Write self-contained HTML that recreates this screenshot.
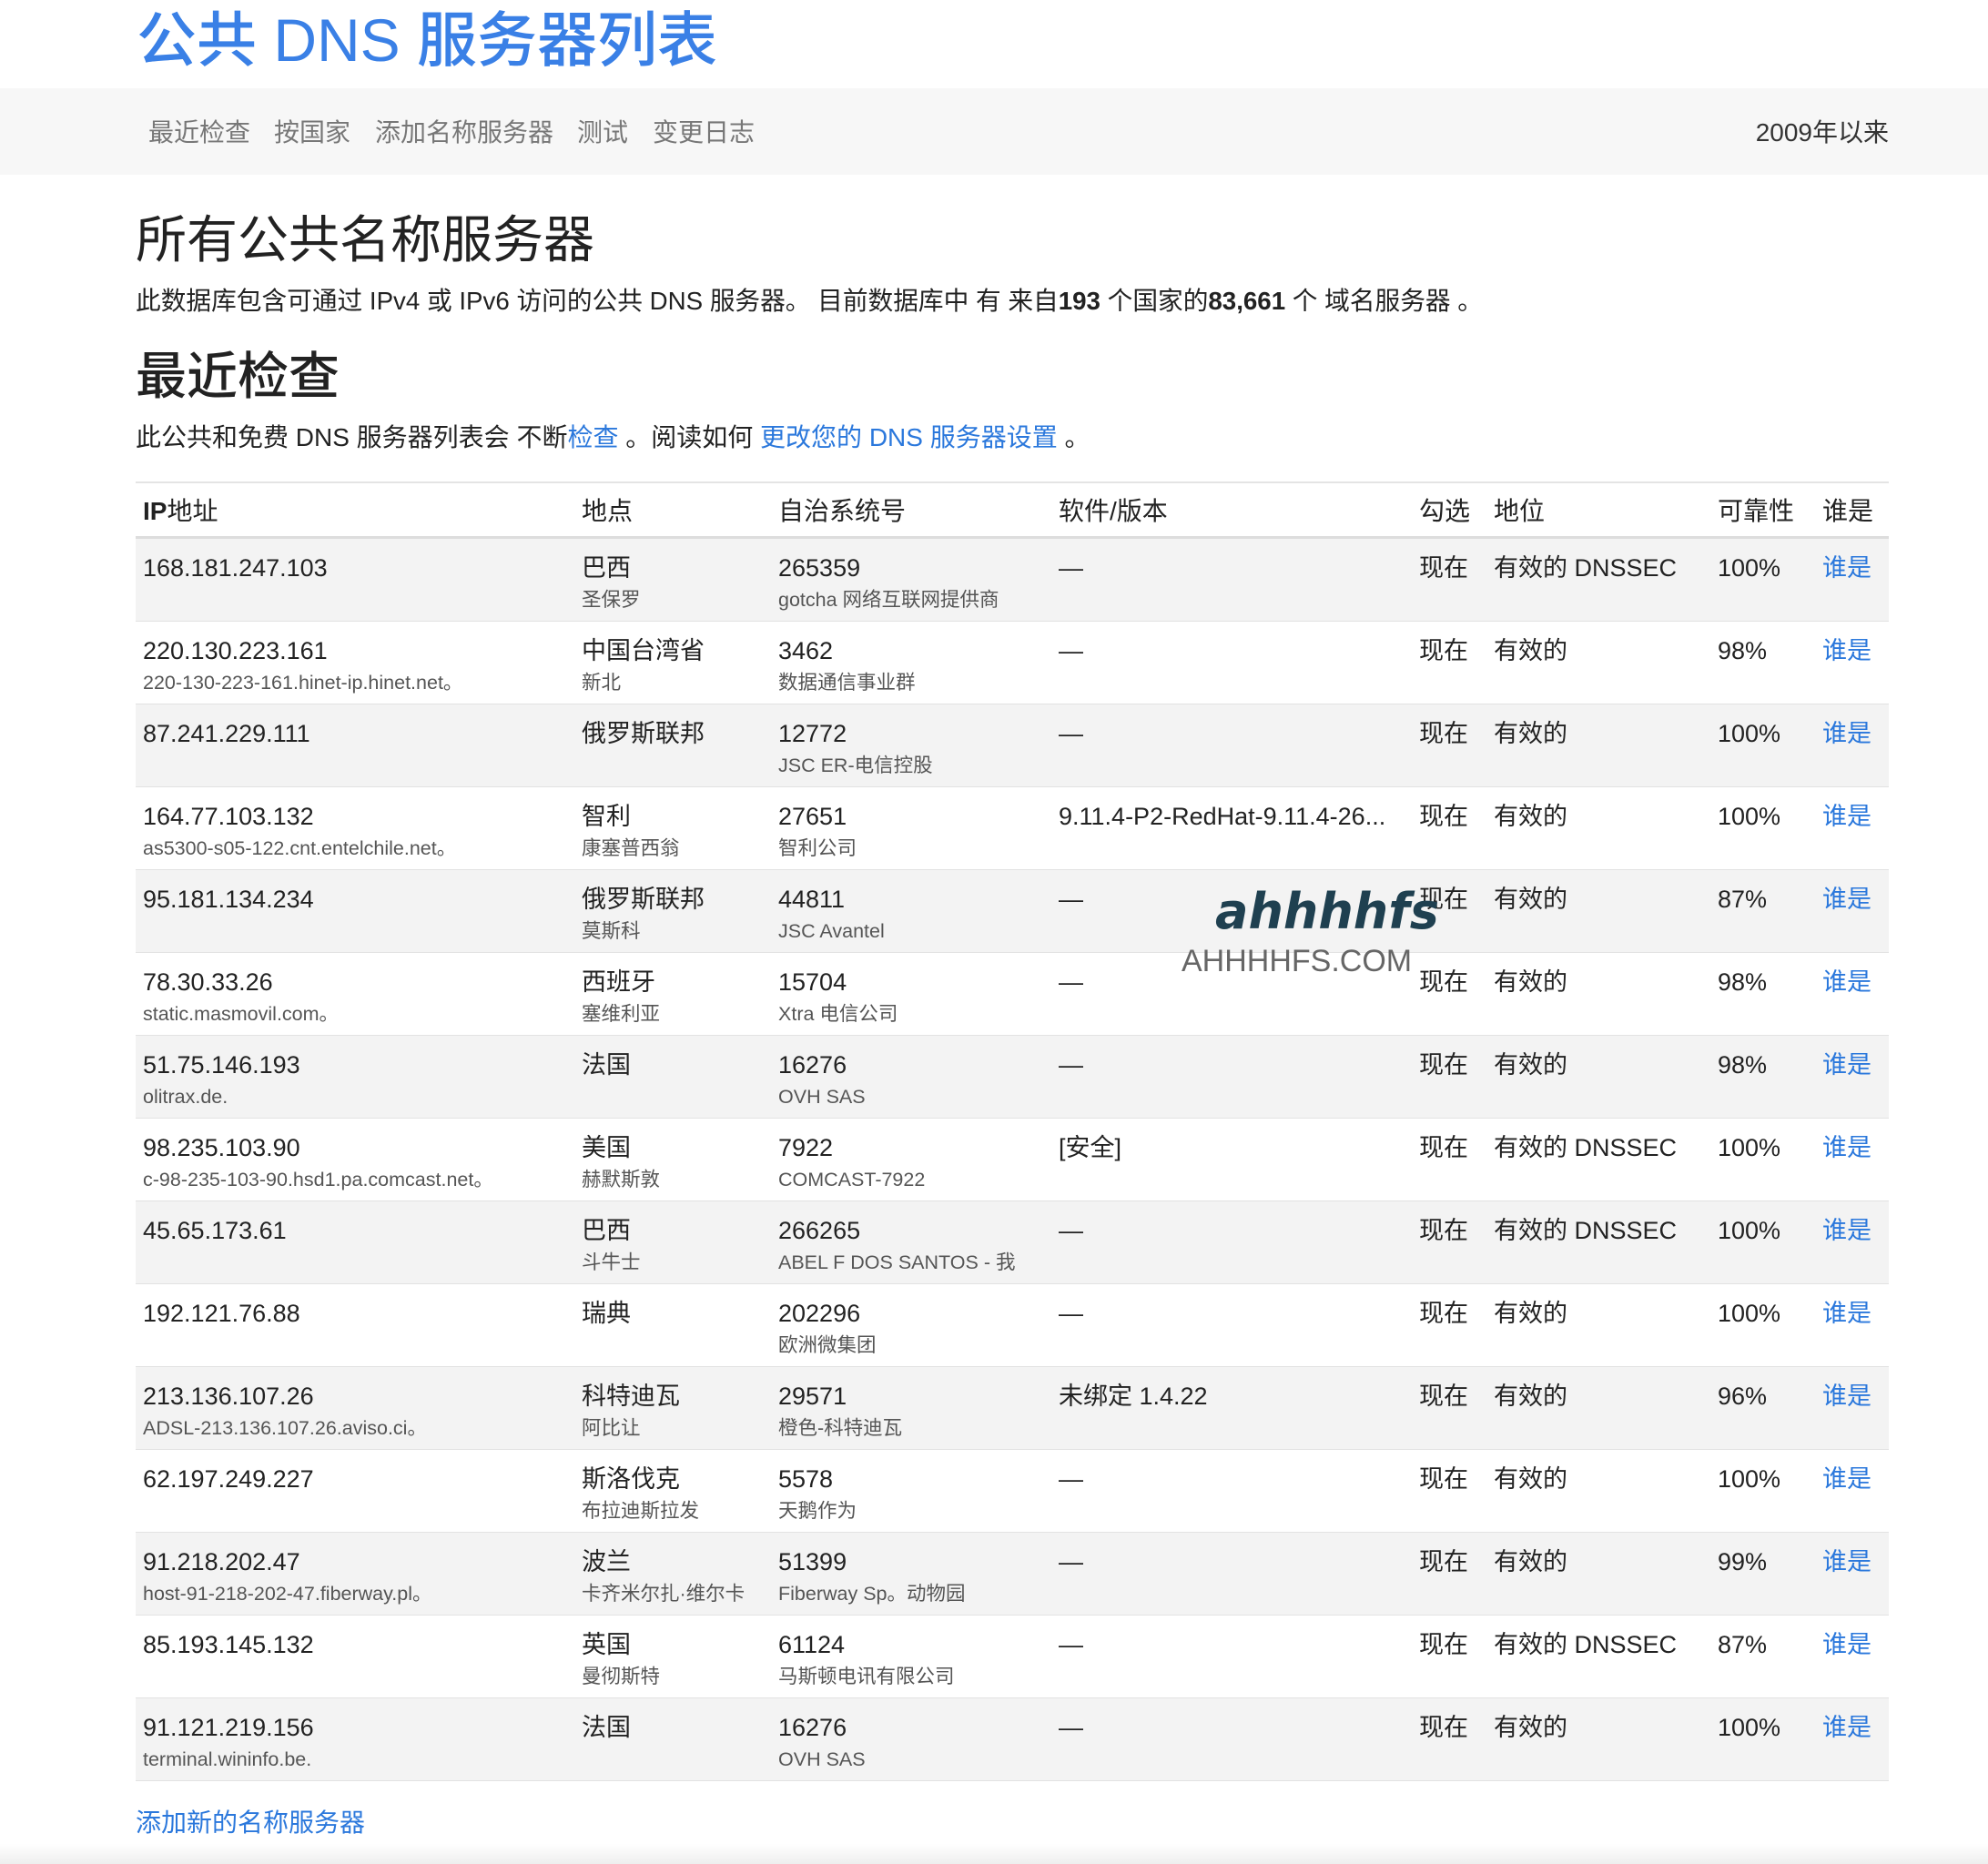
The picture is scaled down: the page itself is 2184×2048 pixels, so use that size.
<!DOCTYPE html>
<html><head><meta charset="utf-8"><style>
*{margin:0;padding:0;box-sizing:border-box}
body{width:2184px;height:2048px;background:#fff;font-family:"Liberation Sans","Noto Sans CJK SC",sans-serif;color:#222;position:relative;overflow:hidden}
.abs{position:absolute;white-space:nowrap}
.blue{color:#2b78dc}
.nav{position:absolute;left:0;top:97px;width:2184px;height:95px;background:#f7f7f7}
.nav span{position:absolute;top:32px;font-size:28px;line-height:34px;color:#777}
.tbl{position:absolute;left:149px;top:529px;width:1926px;border-top:2px solid #e4e4e4}
.hdr{height:61px;border-bottom:3px solid #ddd;position:relative}
.row{height:91px;border-bottom:1px solid #e2e2e2;position:relative}
.row:nth-child(odd){background:#f3f3f3}
.c{position:absolute;top:0;white-space:nowrap}
.hdr .c{top:13px;font-size:28px;line-height:36px}
.l1{display:block;font-size:27px;line-height:36px;margin-top:14px}
.l2{display:block;font-size:21.5px;line-height:26px;margin-top:4px;color:#555}
</style></head><body>
<div class="abs" style="left:150px;top:4px;font-size:66px;line-height:80px;color:#3a80e6;font-weight:500">公共 DNS 服务器列表</div>
<div class="nav">
<span style="left:163px">最近检查</span>
<span style="left:301px">按国家</span>
<span style="left:412px">添加名称服务器</span>
<span style="left:634px">测试</span>
<span style="left:717px">变更日志</span>
<span style="right:109px;color:#333">2009年以来</span>
</div>
<div class="abs" style="left:149px;top:228px;font-size:56px;line-height:72px">所有公共名称服务器</div>
<div class="abs" style="left:149px;top:313px;font-size:27.7px;line-height:36px">此数据库包含可通过 IPv4 或 IPv6 访问的公共 DNS 服务器。 目前数据库中 有 来自<b>193</b> 个国家的<b>83,661</b> 个 域名服务器 。</div>
<div class="abs" style="left:149px;top:378px;font-size:56px;line-height:72px;font-weight:500">最近检查</div>
<div class="abs" style="left:149px;top:463px;font-size:28px;line-height:36px">此公共和免费 DNS 服务器列表会 不断<span class="blue">检查</span> 。阅读如何 <span class="blue">更改您的 DNS 服务器设置</span> 。</div>

<div class="tbl">
<div class="hdr">
<div class="c" style="left:8px"><b>IP</b>地址</div>
<div class="c" style="left:490px">地点</div>
<div class="c" style="left:706px">自治系统号</div>
<div class="c" style="left:1014px">软件/版本</div>
<div class="c" style="left:1410px">勾选</div>
<div class="c" style="left:1492px">地位</div>
<div class="c" style="left:1738px">可靠性</div>
<div class="c" style="left:1853px">谁是</div>
</div>
<div>
<div class="row"><div class="c" style="left:8px"><span class="l1">168.181.247.103</span></div><div class="c" style="left:490px"><span class="l1">巴西</span><span class="l2">圣保罗</span></div><div class="c" style="left:706px"><span class="l1">265359</span><span class="l2">gotcha 网络互联网提供商</span></div><div class="c" style="left:1014px"><span class="l1">—</span></div><div class="c" style="left:1410px"><span class="l1">现在</span></div><div class="c" style="left:1492px"><span class="l1">有效的 DNSSEC</span></div><div class="c" style="left:1738px"><span class="l1">100%</span></div><div class="c blue" style="left:1853px"><span class="l1">谁是</span></div></div>
<div class="row"><div class="c" style="left:8px"><span class="l1">220.130.223.161</span><span class="l2">220-130-223-161.hinet-ip.hinet.net。</span></div><div class="c" style="left:490px"><span class="l1">中国台湾省</span><span class="l2">新北</span></div><div class="c" style="left:706px"><span class="l1">3462</span><span class="l2">数据通信事业群</span></div><div class="c" style="left:1014px"><span class="l1">—</span></div><div class="c" style="left:1410px"><span class="l1">现在</span></div><div class="c" style="left:1492px"><span class="l1">有效的</span></div><div class="c" style="left:1738px"><span class="l1">98%</span></div><div class="c blue" style="left:1853px"><span class="l1">谁是</span></div></div>
<div class="row"><div class="c" style="left:8px"><span class="l1">87.241.229.111</span></div><div class="c" style="left:490px"><span class="l1">俄罗斯联邦</span></div><div class="c" style="left:706px"><span class="l1">12772</span><span class="l2">JSC ER-电信控股</span></div><div class="c" style="left:1014px"><span class="l1">—</span></div><div class="c" style="left:1410px"><span class="l1">现在</span></div><div class="c" style="left:1492px"><span class="l1">有效的</span></div><div class="c" style="left:1738px"><span class="l1">100%</span></div><div class="c blue" style="left:1853px"><span class="l1">谁是</span></div></div>
<div class="row"><div class="c" style="left:8px"><span class="l1">164.77.103.132</span><span class="l2">as5300-s05-122.cnt.entelchile.net。</span></div><div class="c" style="left:490px"><span class="l1">智利</span><span class="l2">康塞普西翁</span></div><div class="c" style="left:706px"><span class="l1">27651</span><span class="l2">智利公司</span></div><div class="c" style="left:1014px"><span class="l1">9.11.4-P2-RedHat-9.11.4-26...</span></div><div class="c" style="left:1410px"><span class="l1">现在</span></div><div class="c" style="left:1492px"><span class="l1">有效的</span></div><div class="c" style="left:1738px"><span class="l1">100%</span></div><div class="c blue" style="left:1853px"><span class="l1">谁是</span></div></div>
<div class="row"><div class="c" style="left:8px"><span class="l1">95.181.134.234</span></div><div class="c" style="left:490px"><span class="l1">俄罗斯联邦</span><span class="l2">莫斯科</span></div><div class="c" style="left:706px"><span class="l1">44811</span><span class="l2">JSC Avantel</span></div><div class="c" style="left:1014px"><span class="l1">—</span></div><div class="c" style="left:1410px"><span class="l1">现在</span></div><div class="c" style="left:1492px"><span class="l1">有效的</span></div><div class="c" style="left:1738px"><span class="l1">87%</span></div><div class="c blue" style="left:1853px"><span class="l1">谁是</span></div></div>
<div class="row"><div class="c" style="left:8px"><span class="l1">78.30.33.26</span><span class="l2">static.masmovil.com。</span></div><div class="c" style="left:490px"><span class="l1">西班牙</span><span class="l2">塞维利亚</span></div><div class="c" style="left:706px"><span class="l1">15704</span><span class="l2">Xtra 电信公司</span></div><div class="c" style="left:1014px"><span class="l1">—</span></div><div class="c" style="left:1410px"><span class="l1">现在</span></div><div class="c" style="left:1492px"><span class="l1">有效的</span></div><div class="c" style="left:1738px"><span class="l1">98%</span></div><div class="c blue" style="left:1853px"><span class="l1">谁是</span></div></div>
<div class="row"><div class="c" style="left:8px"><span class="l1">51.75.146.193</span><span class="l2">olitrax.de.</span></div><div class="c" style="left:490px"><span class="l1">法国</span></div><div class="c" style="left:706px"><span class="l1">16276</span><span class="l2">OVH SAS</span></div><div class="c" style="left:1014px"><span class="l1">—</span></div><div class="c" style="left:1410px"><span class="l1">现在</span></div><div class="c" style="left:1492px"><span class="l1">有效的</span></div><div class="c" style="left:1738px"><span class="l1">98%</span></div><div class="c blue" style="left:1853px"><span class="l1">谁是</span></div></div>
<div class="row"><div class="c" style="left:8px"><span class="l1">98.235.103.90</span><span class="l2">c-98-235-103-90.hsd1.pa.comcast.net。</span></div><div class="c" style="left:490px"><span class="l1">美国</span><span class="l2">赫默斯敦</span></div><div class="c" style="left:706px"><span class="l1">7922</span><span class="l2">COMCAST-7922</span></div><div class="c" style="left:1014px"><span class="l1">[安全]</span></div><div class="c" style="left:1410px"><span class="l1">现在</span></div><div class="c" style="left:1492px"><span class="l1">有效的 DNSSEC</span></div><div class="c" style="left:1738px"><span class="l1">100%</span></div><div class="c blue" style="left:1853px"><span class="l1">谁是</span></div></div>
<div class="row"><div class="c" style="left:8px"><span class="l1">45.65.173.61</span></div><div class="c" style="left:490px"><span class="l1">巴西</span><span class="l2">斗牛士</span></div><div class="c" style="left:706px"><span class="l1">266265</span><span class="l2">ABEL F DOS SANTOS - 我</span></div><div class="c" style="left:1014px"><span class="l1">—</span></div><div class="c" style="left:1410px"><span class="l1">现在</span></div><div class="c" style="left:1492px"><span class="l1">有效的 DNSSEC</span></div><div class="c" style="left:1738px"><span class="l1">100%</span></div><div class="c blue" style="left:1853px"><span class="l1">谁是</span></div></div>
<div class="row"><div class="c" style="left:8px"><span class="l1">192.121.76.88</span></div><div class="c" style="left:490px"><span class="l1">瑞典</span></div><div class="c" style="left:706px"><span class="l1">202296</span><span class="l2">欧洲微集团</span></div><div class="c" style="left:1014px"><span class="l1">—</span></div><div class="c" style="left:1410px"><span class="l1">现在</span></div><div class="c" style="left:1492px"><span class="l1">有效的</span></div><div class="c" style="left:1738px"><span class="l1">100%</span></div><div class="c blue" style="left:1853px"><span class="l1">谁是</span></div></div>
<div class="row"><div class="c" style="left:8px"><span class="l1">213.136.107.26</span><span class="l2">ADSL-213.136.107.26.aviso.ci。</span></div><div class="c" style="left:490px"><span class="l1">科特迪瓦</span><span class="l2">阿比让</span></div><div class="c" style="left:706px"><span class="l1">29571</span><span class="l2">橙色-科特迪瓦</span></div><div class="c" style="left:1014px"><span class="l1">未绑定 1.4.22</span></div><div class="c" style="left:1410px"><span class="l1">现在</span></div><div class="c" style="left:1492px"><span class="l1">有效的</span></div><div class="c" style="left:1738px"><span class="l1">96%</span></div><div class="c blue" style="left:1853px"><span class="l1">谁是</span></div></div>
<div class="row"><div class="c" style="left:8px"><span class="l1">62.197.249.227</span></div><div class="c" style="left:490px"><span class="l1">斯洛伐克</span><span class="l2">布拉迪斯拉发</span></div><div class="c" style="left:706px"><span class="l1">5578</span><span class="l2">天鹅作为</span></div><div class="c" style="left:1014px"><span class="l1">—</span></div><div class="c" style="left:1410px"><span class="l1">现在</span></div><div class="c" style="left:1492px"><span class="l1">有效的</span></div><div class="c" style="left:1738px"><span class="l1">100%</span></div><div class="c blue" style="left:1853px"><span class="l1">谁是</span></div></div>
<div class="row"><div class="c" style="left:8px"><span class="l1">91.218.202.47</span><span class="l2">host-91-218-202-47.fiberway.pl。</span></div><div class="c" style="left:490px"><span class="l1">波兰</span><span class="l2">卡齐米尔扎·维尔卡</span></div><div class="c" style="left:706px"><span class="l1">51399</span><span class="l2">Fiberway Sp。动物园</span></div><div class="c" style="left:1014px"><span class="l1">—</span></div><div class="c" style="left:1410px"><span class="l1">现在</span></div><div class="c" style="left:1492px"><span class="l1">有效的</span></div><div class="c" style="left:1738px"><span class="l1">99%</span></div><div class="c blue" style="left:1853px"><span class="l1">谁是</span></div></div>
<div class="row"><div class="c" style="left:8px"><span class="l1">85.193.145.132</span></div><div class="c" style="left:490px"><span class="l1">英国</span><span class="l2">曼彻斯特</span></div><div class="c" style="left:706px"><span class="l1">61124</span><span class="l2">马斯顿电讯有限公司</span></div><div class="c" style="left:1014px"><span class="l1">—</span></div><div class="c" style="left:1410px"><span class="l1">现在</span></div><div class="c" style="left:1492px"><span class="l1">有效的 DNSSEC</span></div><div class="c" style="left:1738px"><span class="l1">87%</span></div><div class="c blue" style="left:1853px"><span class="l1">谁是</span></div></div>
<div class="row"><div class="c" style="left:8px"><span class="l1">91.121.219.156</span><span class="l2">terminal.wininfo.be.</span></div><div class="c" style="left:490px"><span class="l1">法国</span></div><div class="c" style="left:706px"><span class="l1">16276</span><span class="l2">OVH SAS</span></div><div class="c" style="left:1014px"><span class="l1">—</span></div><div class="c" style="left:1410px"><span class="l1">现在</span></div><div class="c" style="left:1492px"><span class="l1">有效的</span></div><div class="c" style="left:1738px"><span class="l1">100%</span></div><div class="c blue" style="left:1853px"><span class="l1">谁是</span></div></div>
</div>
</div>
<div class="abs" style="left:1335px;top:972px;font-size:54px;line-height:60px;color:#1f4050;font-family:'DejaVu Sans',sans-serif;font-weight:bold;font-style:italic">ahhhhfs</div>
<div class="abs" style="left:1298px;top:1036px;font-size:34px;line-height:40px;color:#666">AHHHHFS.COM</div>
<div class="abs blue" style="left:149px;top:1985px;font-size:28px;line-height:36px">添加新的名称服务器</div>
<div style="position:absolute;left:0;top:2026px;width:2184px;height:22px;background:linear-gradient(#fff,#eee)"></div>
</body></html>
